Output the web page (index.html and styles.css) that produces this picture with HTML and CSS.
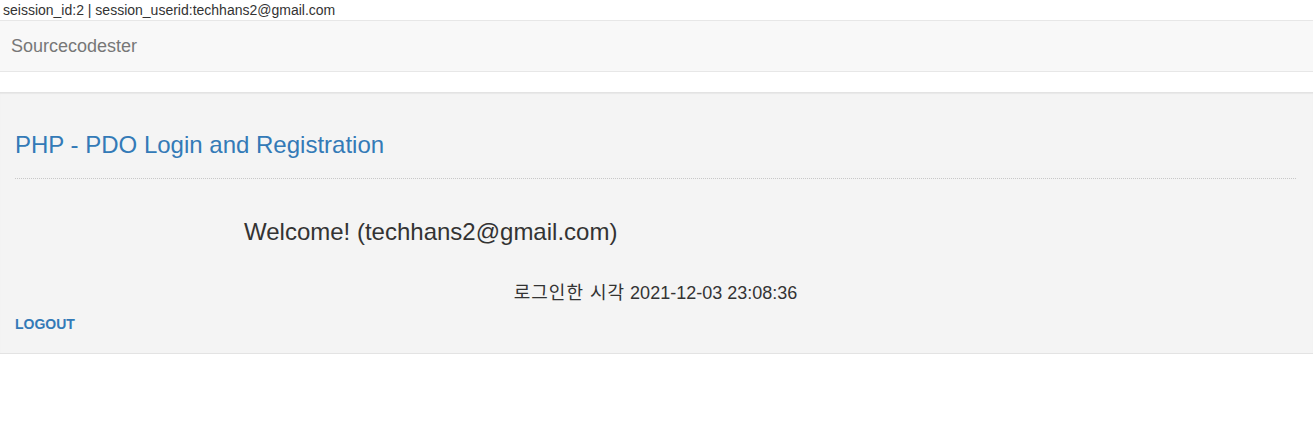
FILE: index.html
```html
<!DOCTYPE html>
<html lang="ko">
<head>
<meta charset="utf-8">
<title>PHP - PDO Login and Registration</title>
<link rel="stylesheet" href="styles.css">
</head>
<body>
<div class="session">seission_id:2 | session_userid:techhans2@gmail.com</div>
<nav class="navbar">
  <a class="brand" href="#">Sourcecodester</a>
</nav>
<div class="well">
  <div class="page-header">
    <h3 class="title">PHP - PDO Login and Registration</h3>
  </div>
  <h3 class="welcome">Welcome! (techhans2@gmail.com)</h3>
  <p class="login-time"><span class="ko">로그인한 시각</span> 2021-12-03 23:08:36</p>
  <a class="logout" href="#">Logout</a>
</div>
</body>
</html>
```
FILE: styles.css
```css
html, body {
  margin: 0;
  padding: 0;
  background: #fff;
}
body {
  font-family: "Liberation Sans", Arial, "Noto Sans CJK KR", sans-serif;
  font-size: 14px;
  line-height: 20px;
  color: #333;
}
.session {
  padding-left: 3px;
  height: 20px;
}
.navbar {
  height: 50px;
  background: #f8f8f8;
  border-top: 1px solid #e7e7e7;
  border-bottom: 1px solid #e7e7e7;
  margin-bottom: 20px;
  display: flex;
  align-items: center;
}
.brand {
  padding: 15px 11px;
  font-size: 18px;
  line-height: 20px;
  color: #777;
  text-decoration: none;
}
.well {
  background: #f4f4f4;
  border-top: 1px solid #e3e3e3;
  border-bottom: 1px solid #e3e3e3;
  box-shadow: inset 0 1px 1px rgba(0, 0, 0, 0.05);
  padding: 19px 17px 19px 15px;
}
.page-header {
  padding: 20px 0 20px;
  border-bottom: 1px dotted #c8c8c8;
}
.title {
  margin: 0;
  font-size: 24px;
  line-height: 26px;
  font-weight: normal;
  color: #337ab7;
}
.welcome {
  margin: 40px 0 0 229px;
  font-size: 24px;
  line-height: 26px;
  font-weight: normal;
  color: #333;
}
.login-time {
  margin: 38px 0 0;
  font-size: 18px;
  line-height: 20px;
  height: 20px;
  text-align: center;
  color: #333;
}
.ko {
  letter-spacing: 1px;
}
.logout {
  display: block;
  margin-top: 11px;
  font-size: 14px;
  line-height: 20px;
  font-weight: bold;
  text-transform: uppercase;
  color: #337ab7;
  text-decoration: none;
}
```
